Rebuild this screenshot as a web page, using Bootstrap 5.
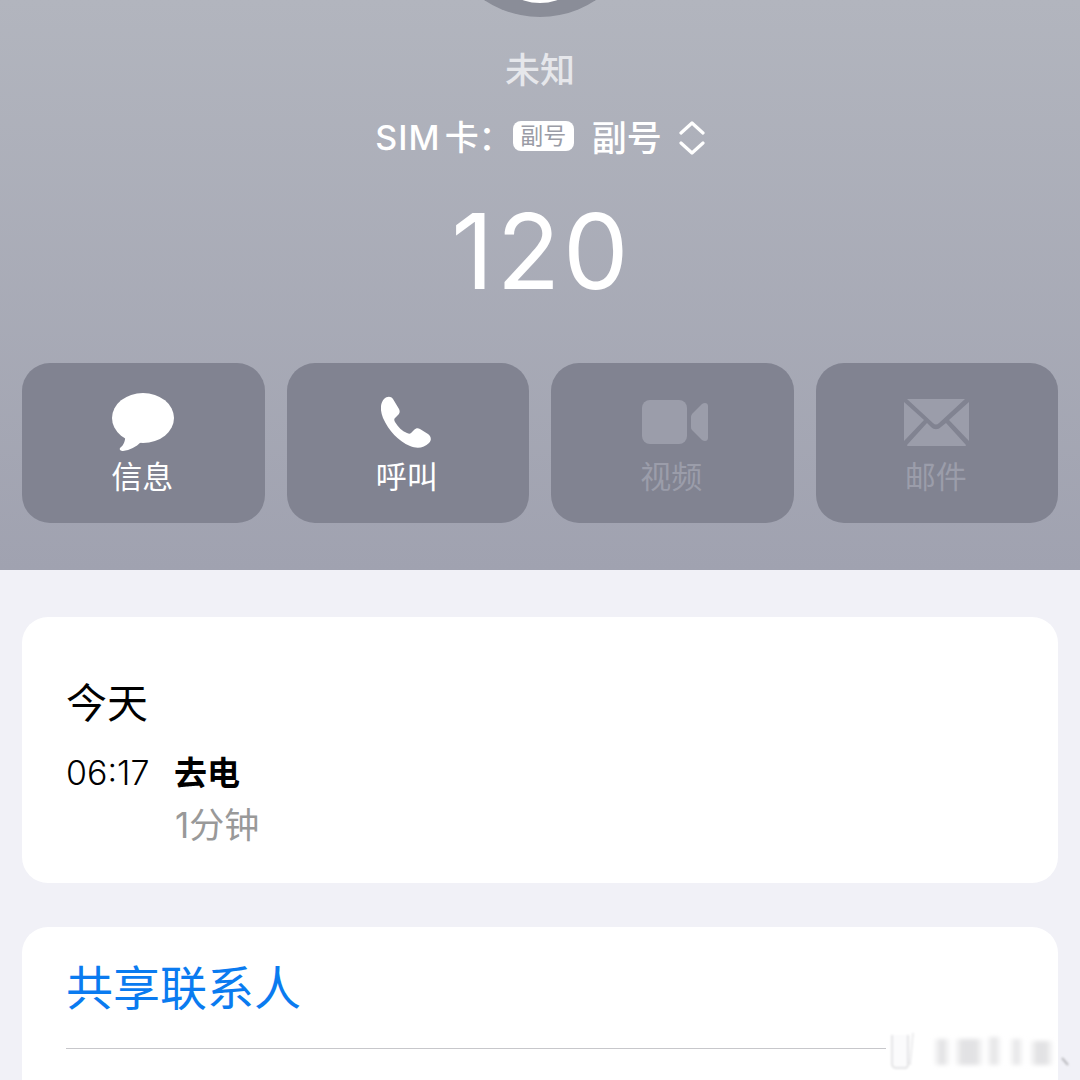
<!DOCTYPE html>
<html lang="zh">
<head>
    <meta charset="UTF-8">
    <title>未知</title>
    <link rel="stylesheet" href="https://cdn.jsdelivr.net/npm/bootstrap@5.3.0/dist/css/bootstrap.min.css">
    <style>
        html, body { height: 1080px; overflow: hidden; }
        body {
            background: #f1f1f7;
            font-family: "Inter", "Noto Sans CJK SC", sans-serif;
        }
        .top-panel {
            height: 570px;
            background: linear-gradient(180deg, #b2b5be 0%, #a0a2b0 100%);
            color: #fff;
        }
        .avatar-cut { width: 240px; height: 18px; }
        .caller-name {
            margin-top: 29px;
            height: 46px;
            font-size: 35px;
            line-height: 46px;
            font-weight: 500;
            color: #e6e7eb;
        }
        .sim-row {
            margin-top: 23px;
            height: 44px;
            font-size: 34px;
            line-height: 44px;
            font-weight: 500;
        }
        .sim-latin { letter-spacing: 1px; }
        .sim-gap { margin-left: 4px; }
        .sim-tag {
            width: 61px;
            height: 30px;
            margin: 0 18px 4px 0;
            border-radius: 8px;
            background: #fff;
            color: #9a9ca6;
            font-size: 23px;
            line-height: 30px;
            font-weight: 400;
        }
        .sim-val { width: 70px; font-size: 35px; white-space: nowrap; }
        .sim-arrows { margin-left: 17px; }
        .phone-no {
            margin-top: 26px;
            padding-left: 3px;
            height: 130px;
            font-weight: 400;
            font-size: 104px;
            line-height: 130px;
            letter-spacing: 3px;
        }
        .action-row {
            margin-top: 47px;
            padding: 0 22px;
            gap: 22px;
        }
        .action-tile {
            flex: 1 1 0;
            height: 160px;
            border-radius: 28px;
            background: #818391;
            font-size: 31px;
            line-height: 40px;
        }
        .action-tile.off { color: #9b9daa; }
        .tile-icon { height: 62px; margin-top: 28px; }
        .tile-label { margin-top: 4px; margin-left: -2px; }
        .icon-shift-l { margin-left: -4px; }
        .icon-shift-r { margin-left: 6px; }
        .sheet {
            margin: 0 22px;
            background: #fff;
            border-radius: 26px;
        }
        .sheet-log {
            margin-top: 47px;
            height: 266px;
            padding: 56px 44px 0;
        }
        .log-day { font-size: 41px; line-height: 60px; color: #000; }
        .log-row { margin-top: 16px; }
        .log-time { width: 108px; font-size: 34px; line-height: 48px; font-weight: 350; color: #000; }
        .log-kind { font-size: 33px; line-height: 48px; font-weight: 700; color: #000; }
        .log-len { margin: 4px 0 0 1px; font-size: 35px; line-height: 48px; color: #999; }
        .sheet-share {
            margin-top: 44px;
            height: 153px;
            padding: 0 44px;
            border-radius: 26px 26px 0 0;
        }
        .share-link {
            height: 122px;
            font-size: 47px;
            line-height: 121px;
            color: #0a7bf0;
            border-bottom: 1px solid #c7c7cb;
            width: 820px;
            white-space: nowrap;
        }
        .watermark {
            position: absolute;
            left: 880px;
            top: 1030px;
            width: 198px;
            height: 44px;
        }
    </style>
</head>
<body class="position-relative">
    <div class="top-panel d-flex flex-column align-items-center">
        <svg class="avatar-cut" viewBox="0 0 240 18">
            <circle cx="120" cy="-83" r="100" fill="#8a8d98"/>
            <ellipse cx="120" cy="-30" rx="42" ry="33" fill="#fff"/>
        </svg>
        <div class="caller-name">未知</div>
        <div class="sim-row d-flex align-items-center">
            <span><span class="sim-latin">SIM</span><span class="sim-gap">卡：</span></span>
            <span class="sim-tag text-center">副号</span>
            <span class="sim-val">副号</span>
            <svg class="sim-arrows" width="26" height="36" viewBox="0 0 26 36" fill="none" stroke="#fff" stroke-width="3.2" stroke-linecap="round" stroke-linejoin="round">
                <path d="M2 13 13 3 24 13"/>
                <path d="M2 23 13 33 24 23"/>
            </svg>
        </div>
        <div class="phone-no">120</div>
        <div class="action-row d-flex w-100">
            <div class="action-tile text-center">
                <div class="tile-icon d-flex justify-content-center align-items-center">
                    <svg width="62" height="58" viewBox="0 0 62 58" fill="#fff">
                        <ellipse cx="31" cy="25" rx="31" ry="25"/>
                        <path d="M13 40C14 47 12 52 8 55 7 57 9 58 11 58 18 57 24 54 29 49Z"/>
                    </svg>
                </div>
                <div class="tile-label">信息</div>
            </div>
            <div class="action-tile text-center">
                <div class="tile-icon d-flex justify-content-center align-items-center">
                    <svg class="icon-shift-l" width="50" height="52" viewBox="0 0 50 52" fill="#fff">
                        <path d="M3 3C6 0 10 0 12 3L18 13C19 15 19 17 17 19L14 22C13 23 13 24 14 26 17 31 21 35 26 37 28 38 29 38 30 37L33 34C35 32 37 32 39 33L47 38C50 40 51 44 48 47 43 52 36 53 29 50 17 45 8 35 2 22-1 14-1 8 3 3Z"/>
                    </svg>
                </div>
                <div class="tile-label">呼叫</div>
            </div>
            <div class="action-tile off text-center">
                <div class="tile-icon d-flex justify-content-center align-items-center">
                    <svg class="icon-shift-r" width="66" height="44" viewBox="0 0 66 44" fill="#9b9daa">
                        <rect x="0" y="0" width="45" height="44" rx="8"/>
                        <path d="M49 17C49 15 50 14 51 13L60 4C63 2 66 3 66 6V38C66 41 63 42 60 40L51 31C50 30 49 29 49 27Z"/>
                    </svg>
                </div>
                <div class="tile-label">视频</div>
            </div>
            <div class="action-tile off text-center">
                <div class="tile-icon d-flex justify-content-center align-items-center">
                    <svg width="65" height="47" viewBox="0 0 65 47" fill="#9b9daa">
                        <path d="M3 0H61L35 24C33 26 31 26 29 24Z"/>
                        <path d="M0 3 20 21 0 42Z"/>
                        <path d="M65 3 45 21 65 42Z"/>
                        <path d="M23 24 27 28C30 31 34 31 37 28L42 24 62 46C62 47 61 47 60 47H5C4 47 3 47 3 46Z"/>
                    </svg>
                </div>
                <div class="tile-label">邮件</div>
            </div>
        </div>
    </div>

    <div class="sheet sheet-log">
        <div class="log-day">今天</div>
        <div class="log-row d-flex">
            <div class="log-time">06:17</div>
            <div>
                <div class="log-kind">去电</div>
                <div class="log-len">1分钟</div>
            </div>
        </div>
    </div>

    <div class="sheet sheet-share">
        <div class="share-link">共享联系人</div>
    </div>

    <!-- the blurred watermark over the corner of the card -->
    <svg class="watermark" viewBox="0 0 198 44">
        <defs>
            <filter id="smear" x="-20%" y="-20%" width="140%" height="140%"><feGaussianBlur stdDeviation="3 2"/></filter>
            <filter id="soft"><feGaussianBlur stdDeviation="0.8"/></filter>
        </defs>
        <g fill="#e2e2e4" filter="url(#smear)">
            <rect x="57" y="9" width="10" height="26"/>
            <rect x="78" y="9" width="22" height="26"/>
            <rect x="110" y="7" width="8" height="28"/>
            <rect x="133" y="9" width="7" height="26"/>
            <rect x="153" y="11" width="17" height="24"/>
        </g>
        <g filter="url(#soft)">
            <path d="M12 5V34Q12 38 17 38H25Q28 38 28 34V5" fill="#fbfbfc" stroke="#dcdcde" stroke-width="1.5"/>
            <path d="M33 3 30 35" stroke="#e6e6e8" stroke-width="1.5"/>
            <path d="M182 28 188 35" stroke="#b8b8bc" stroke-width="2"/>
        </g>
    </svg>

    <script src="https://cdn.jsdelivr.net/npm/bootstrap@5.3.0/dist/js/bootstrap.bundle.min.js"></script>
</body>
</html>
